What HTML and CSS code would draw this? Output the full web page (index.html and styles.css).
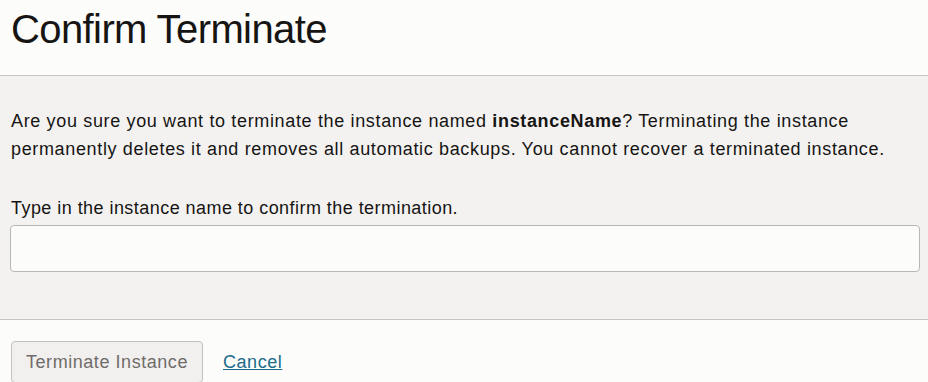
FILE: index.html
```html
<!DOCTYPE html>
<html lang="en">
<head>
  <meta charset="UTF-8">
  <title>Confirm Terminate</title>
  <link rel="stylesheet" href="styles.css">
</head>
<body>
  <div class="dialog">
    <header class="dialog-header">
      <h1>Confirm Terminate</h1>
    </header>

    <div class="dialog-body">
      <p class="warning">Are you sure you want to terminate the instance named <b>instanceName</b>? Terminating the instance permanently deletes it and removes all automatic backups. You cannot recover a terminated instance.</p>
      <label class="field-label" for="confirmName">Type in the instance name to confirm the termination.</label>
      <input type="text" id="confirmName" class="field-input">
    </div>

    <footer class="dialog-footer">
      <button class="btn-terminate" disabled>Terminate Instance</button>
      <a href="#" class="cancel-link">Cancel</a>
    </footer>
  </div>
</body>
</html>
```

FILE: styles.css
```css
* {
  margin: 0;
  padding: 0;
  box-sizing: border-box;
}
body {
  font-family: "Liberation Sans", Arial, sans-serif;
  background-color: #fcfcfb;
  color: #161513;
  letter-spacing: 0.55px;
}
.dialog-header {
  height: 76px;
  padding: 6px 11px 0;
  border-bottom: 1px solid #c7c4c1;
  background-color: #fcfcfb;
}
.dialog-header h1 {
  font-size: 40px;
  font-weight: 400;
  line-height: 46px;
  letter-spacing: -0.6px;
}
.dialog-body {
  background-color: #f3f2f1;
  padding: 31px 8px 0 10px;
  height: 244px;
  border-bottom: 1px solid #c7c4c1;
}
.warning {
  font-size: 18px;
  line-height: 28px;
  padding-left: 1px;
  margin-bottom: 31px;
  letter-spacing: 0.65px;
}
.warning b {
  font-weight: 700;
}
.field-label {
  display: block;
  font-size: 18px;
  line-height: 28px;
  padding-left: 1px;
  margin-bottom: 3px;
  letter-spacing: 0.45px;
}
.field-input {
  display: block;
  width: 100%;
  height: 47px;
  border: 1px solid #b9b6b3;
  border-radius: 4px;
  background-color: #fcfcfb;
  font-family: inherit;
  font-size: 18px;
  padding: 0 12px;
}
.dialog-footer {
  display: flex;
  align-items: center;
  gap: 20px;
  padding: 21px 11px 0;
}
.btn-terminate {
  height: 42px;
  padding: 0 14px;
  font-family: inherit;
  font-size: 18px;
  letter-spacing: 0.55px;
  color: #6f6c69;
  background-color: #f1f0ef;
  border: 1px solid #c4c1be;
  border-radius: 4px;
}
.cancel-link {
  font-size: 18px;
  color: #1b6b8b;
  text-decoration: underline;
}
```
